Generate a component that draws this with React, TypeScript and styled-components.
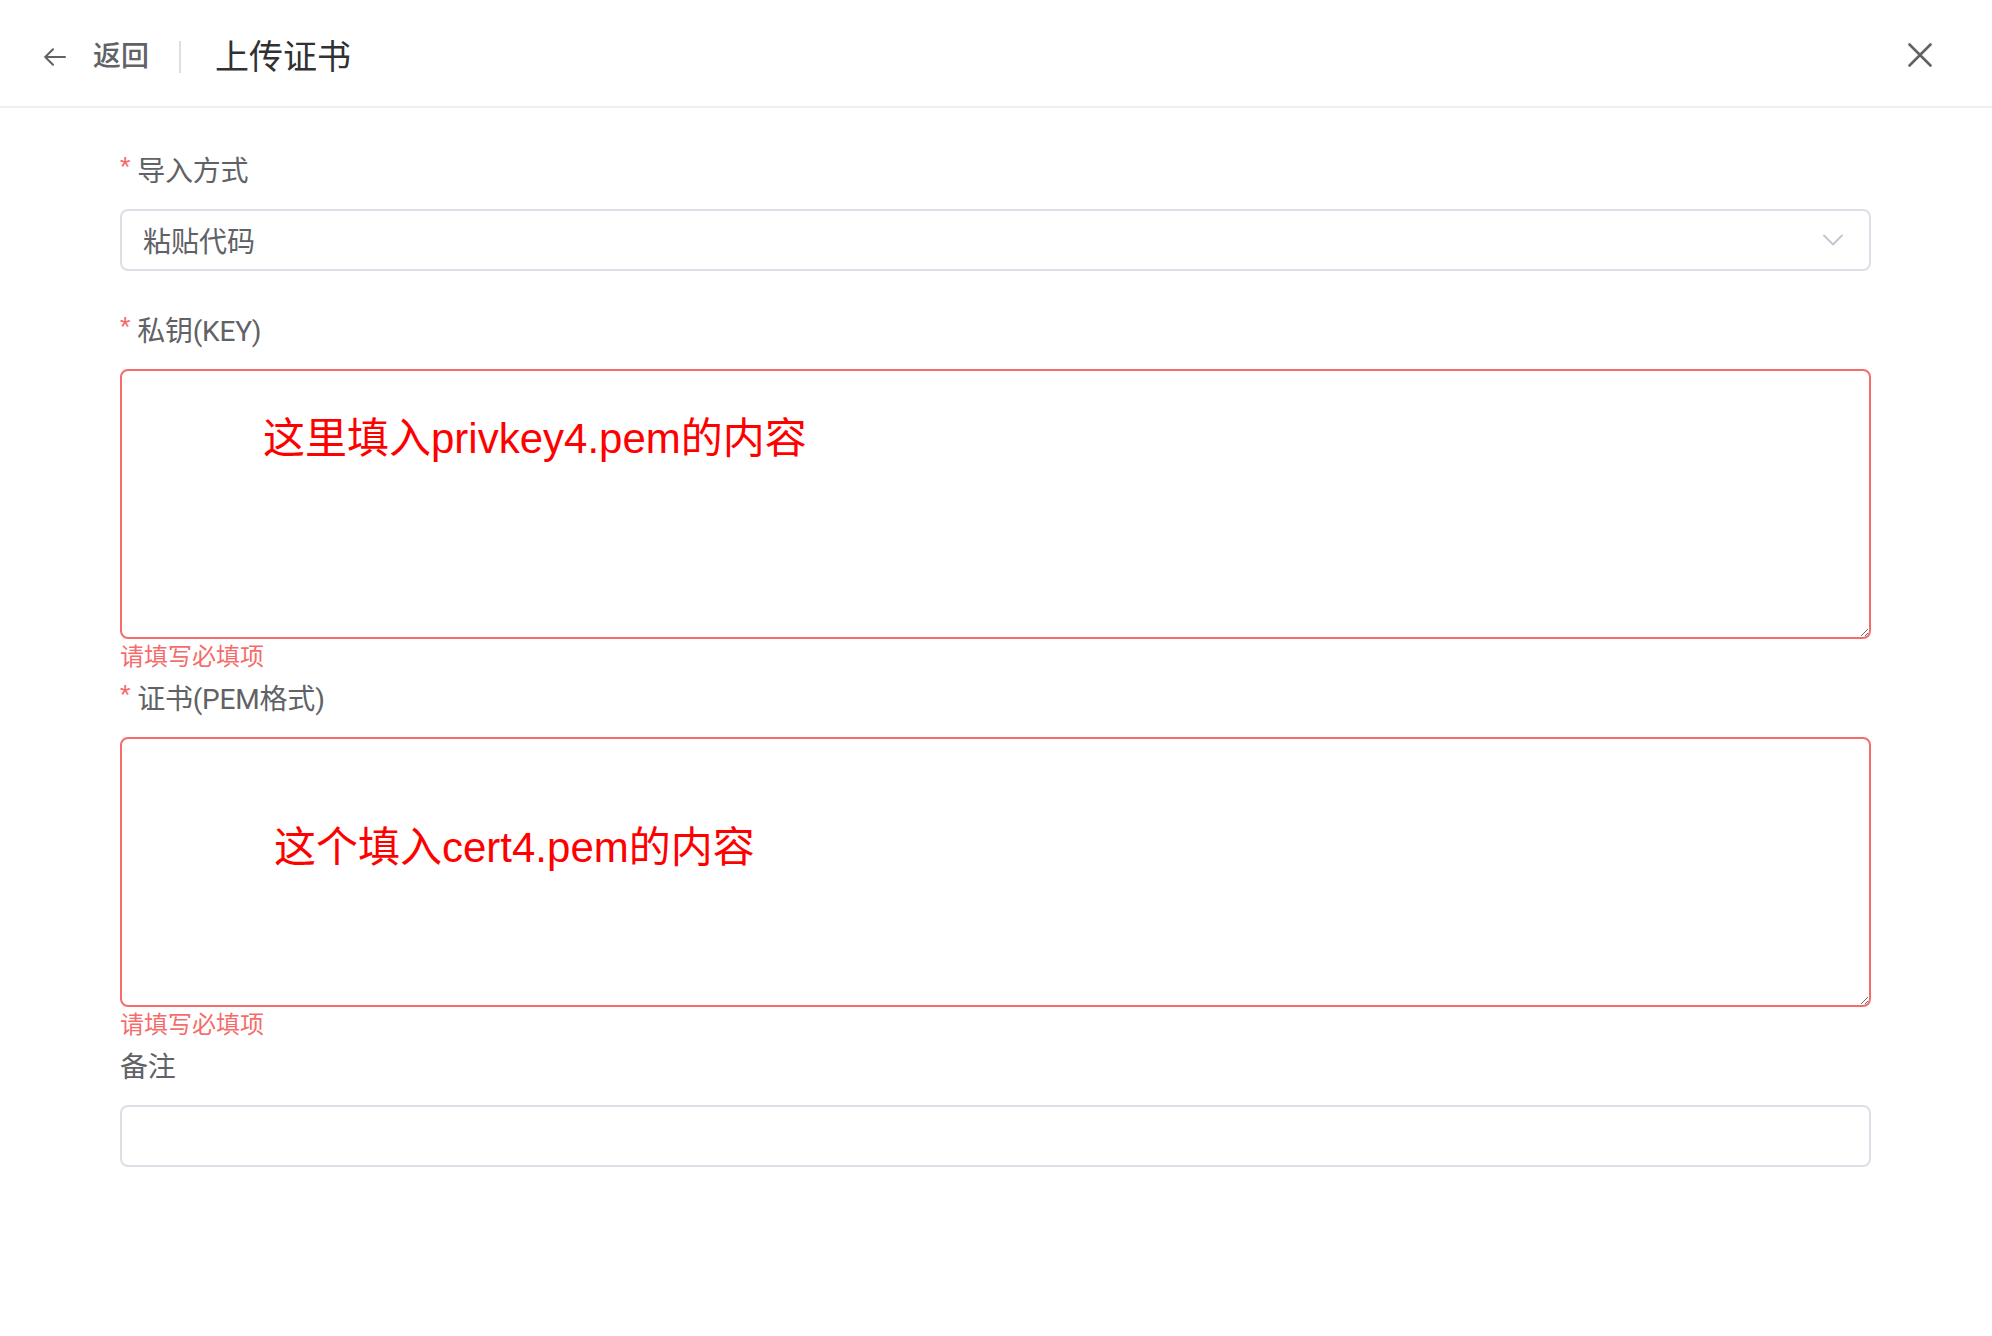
import React from "react";
import styled, { createGlobalStyle } from "styled-components";

const GlobalStyle = createGlobalStyle`
  html, body {
    margin: 0;
    padding: 0;
    background: #ffffff;
  }
  body {
    font-family: "Liberation Sans", "Noto Sans CJK SC", sans-serif;
    -webkit-font-smoothing: antialiased;
  }
  * { box-sizing: border-box; }
`;

const Page = styled.div`
  width: 1992px;
  min-height: 1336px;
  background: #ffffff;
  display: flex;
  flex-direction: column;
`;

const Header = styled.header`
  height: 108px;
  border-bottom: 2px solid #eeeff2;
  display: flex;
  align-items: center;
  padding: 7px 60px 0 44px;
`;

const BackButton = styled.button`
  display: flex;
  align-items: center;
  gap: 27px;
  border: none;
  background: transparent;
  padding: 0;
  cursor: pointer;
  color: #606266;
  font-family: "Liberation Sans", "Noto Sans CJK SC", sans-serif;
  font-size: 28px;
  font-weight: 500;
  line-height: 40px;
`;

const Divider = styled.span`
  width: 2px;
  height: 32px;
  background: #dcdfe6;
  margin: 0 34px 0 30px;
`;

const Title = styled.h1`
  margin: 0;
  font-size: 34px;
  font-weight: 400;
  color: #303133;
  line-height: 48px;
`;

const CloseButton = styled.button`
  margin-left: auto;
  margin-top: -4px;
  border: none;
  background: transparent;
  padding: 0;
  width: 24px;
  height: 24px;
  display: flex;
  cursor: pointer;
`;

const Form = styled.form`
  padding: 33px 121px 0 120px;
  display: flex;
  flex-direction: column;
`;

const Item = styled.div<{ $error?: boolean }>`
  display: flex;
  flex-direction: column;
  margin-bottom: ${(p) => (p.$error ? "0" : "30px")};
`;

const Label = styled.label<{ $required?: boolean }>`
  display: flex;
  align-items: center;
  height: 56px;
  margin-bottom: 12px;
  font-family: Roboto, "Noto Sans CJK SC", sans-serif;
  font-size: 28px;
  letter-spacing: -0.2px;
  color: #606266;
  &::before {
    content: ${(p) => (p.$required ? '"*"' : "none")};
    color: #f56c6c;
    font-size: 24px;
    margin-right: 7px;
    margin-top: -6px;
  }
`;

const SelectBox = styled.div`
  height: 62px;
  border: 2px solid #dcdfe6;
  border-radius: 8px;
  display: flex;
  align-items: center;
  padding: 0 26px 0 21px;
  font-size: 28px;
  color: #606266;
  cursor: pointer;
`;

const SelectValue = styled.span`
  flex: 1;
`;

const AreaWrap = styled.div`
  position: relative;
`;

const TextArea = styled.textarea<{ $invalid?: boolean }>`
  display: block;
  width: 100%;
  height: 270px;
  border: 2px solid ${(p) => (p.$invalid ? "#f56c6c" : "#dcdfe6")};
  border-radius: 8px;
  padding: 10px 21px;
  font-size: 28px;
  font-family: "Liberation Sans", "Noto Sans CJK SC", sans-serif;
  color: #606266;
  resize: vertical;
  outline: none;
  background: #ffffff;
`;

const Annotation = styled.div<{ $left: number; $top: number }>`
  position: absolute;
  left: ${(p) => p.$left}px;
  top: ${(p) => p.$top}px;
  font-size: 42px;
  line-height: 42px;
  color: #ff0000;
  white-space: nowrap;
  pointer-events: none;
  font-family: "Liberation Sans", "Noto Sans CJK SC", sans-serif;
`;

const ErrorText = styled.div`
  height: 30px;
  padding-top: 6px;
  font-size: 24px;
  line-height: 24px;
  color: #f56c6c;
`;

const TextInput = styled.input`
  height: 62px;
  width: 100%;
  border: 2px solid #dcdfe6;
  border-radius: 8px;
  padding: 0 21px;
  font-size: 28px;
  color: #606266;
  outline: none;
  font-family: "Liberation Sans", "Noto Sans CJK SC", sans-serif;
`;

export default function App() {
  return (
    <Page>
      <GlobalStyle />
      <Header>
        <BackButton type="button">
          <svg width="22" height="18" viewBox="0 0 22 18" fill="none">
            <path
              d="M21 9H1.5M9 1.2L1.2 9L9 16.8"
              stroke="#606266"
              strokeWidth="2"
              strokeLinecap="round"
              strokeLinejoin="round"
            />
          </svg>
          <span>返回</span>
        </BackButton>
        <Divider />
        <Title>上传证书</Title>
        <CloseButton type="button" aria-label="关闭">
          <svg width="24" height="24" viewBox="0 0 24 24" fill="none">
            <path
              d="M1.5 1.5L22.5 22.5M22.5 1.5L1.5 22.5"
              stroke="#606266"
              strokeWidth="2.6"
              strokeLinecap="round"
            />
          </svg>
        </CloseButton>
      </Header>

      <Form>
        <Item>
          <Label $required>导入方式</Label>
          <SelectBox>
            <SelectValue>粘贴代码</SelectValue>
            <svg width="20" height="12" viewBox="0 0 20 12" fill="none">
              <path
                d="M1 1.5L10 10.5L19 1.5"
                stroke="#c0c4cc"
                strokeWidth="1.8"
                strokeLinecap="round"
                strokeLinejoin="round"
              />
            </svg>
          </SelectBox>
        </Item>

        <Item $error>
          <Label $required>私钥(KEY)</Label>
          <AreaWrap>
            <TextArea $invalid />
            <Annotation $left={143} $top={49}>
              这里填入privkey4.pem的内容
            </Annotation>
          </AreaWrap>
          <ErrorText>请填写必填项</ErrorText>
        </Item>

        <Item $error>
          <Label $required>证书(PEM格式)</Label>
          <AreaWrap>
            <TextArea $invalid />
            <Annotation $left={154} $top={90}>
              这个填入cert4.pem的内容
            </Annotation>
          </AreaWrap>
          <ErrorText>请填写必填项</ErrorText>
        </Item>

        <Item>
          <Label>备注</Label>
          <TextInput />
        </Item>
      </Form>
    </Page>
  );
}
